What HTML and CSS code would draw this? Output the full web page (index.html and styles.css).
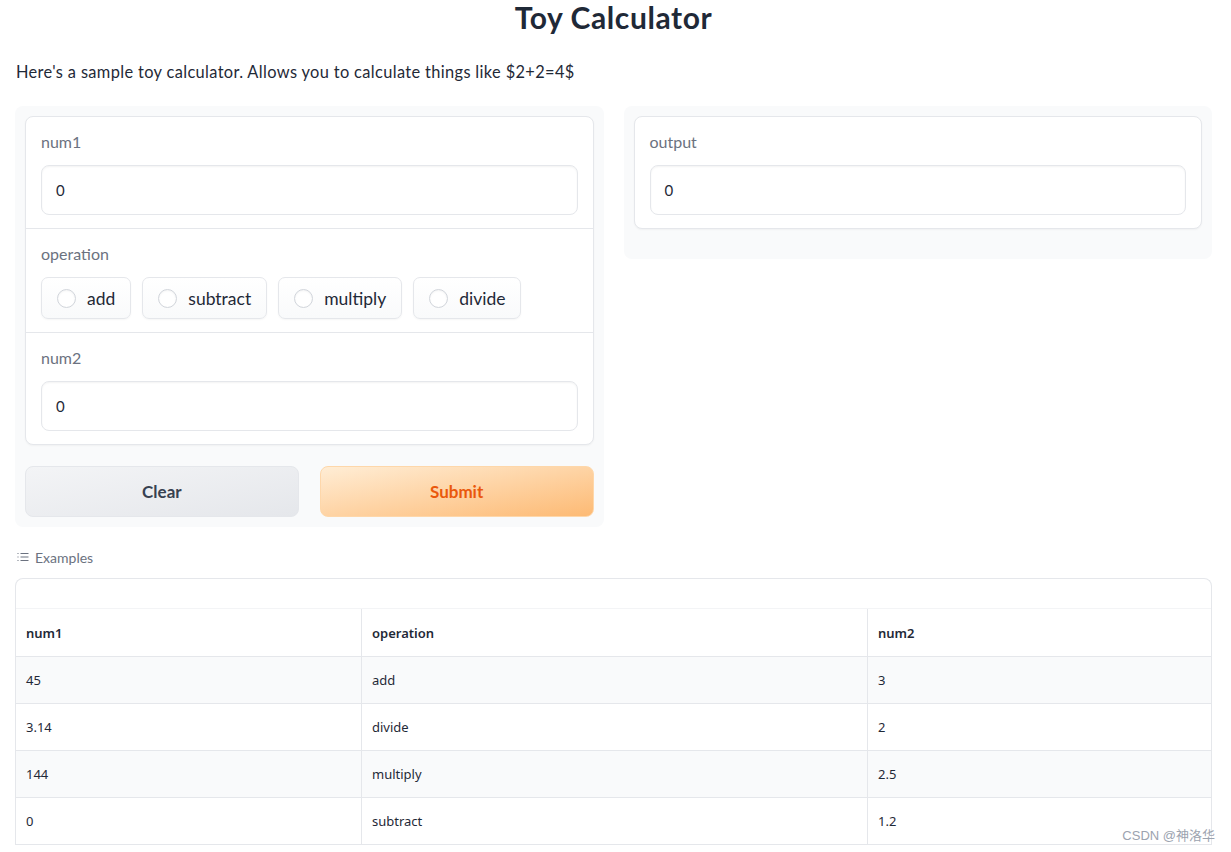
FILE: index.html
```html
<!DOCTYPE html>
<html>
<head>
<meta charset="utf-8">
<link rel="stylesheet" href="styles.css">
</head>
<body>
<div class="page">
  <h1 class="title">Toy Calculator</h1>
  <p class="desc">Here's a sample toy calculator. Allows you to calculate things like $2+2=4$</p>
  <div class="cols">
    <div class="panel">
      <div class="form">
        <div class="block">
          <div class="label">num1</div>
          <div class="input">0</div>
        </div>
        <div class="block">
          <div class="label">operation</div>
          <div class="chips">
            <div class="chip"><span class="radio"></span>add</div>
            <div class="chip"><span class="radio"></span>subtract</div>
            <div class="chip"><span class="radio"></span>multiply</div>
            <div class="chip"><span class="radio"></span>divide</div>
          </div>
        </div>
        <div class="block">
          <div class="label">num2</div>
          <div class="input">0</div>
        </div>
      </div>
      <div class="buttons">
        <div class="btn btn-clear">Clear</div>
        <div class="btn btn-submit">Submit</div>
      </div>
    </div>
    <div class="panel panel-out">
      <div class="form">
        <div class="block">
          <div class="label">output</div>
          <div class="input">0</div>
        </div>
      </div>
    </div>
  </div>
  <div class="ex-label">
    <svg class="ex-icon" width="12" height="10" viewBox="0 0 12 10" fill="none" stroke="#6b7280" stroke-width="1">
      <line x1="0.5" y1="1.5" x2="1.5" y2="1.5"/>
      <line x1="0.5" y1="5" x2="1.5" y2="5"/>
      <line x1="0.5" y1="8.5" x2="1.5" y2="8.5"/>
      <line x1="3.5" y1="1.5" x2="11.5" y2="1.5"/>
      <line x1="3.5" y1="5" x2="11.5" y2="5"/>
      <line x1="3.5" y1="8.5" x2="11.5" y2="8.5"/>
    </svg>
    <span>Examples</span>
  </div>
  <div class="table-wrap">
    <div class="table-top"></div>
    <table class="ex-table">
      <thead>
        <tr><th class="c1">num1</th><th class="c2">operation</th><th class="c3">num2</th></tr>
      </thead>
      <tbody>
        <tr class="alt"><td>45</td><td>add</td><td>3</td></tr>
        <tr><td>3.14</td><td>divide</td><td>2</td></tr>
        <tr class="alt"><td>144</td><td>multiply</td><td>2.5</td></tr>
        <tr><td>0</td><td>subtract</td><td>1.2</td></tr>
      </tbody>
    </table>
  </div>
</div>
<div class="watermark">CSDN @神洛华</div>
</body>
</html>
```

FILE: styles.css
```css
html, body {
  margin: 0;
  padding: 0;
  background: #ffffff;
}
body {
  font-family: "Lato", "Noto Sans", "Noto Sans CJK SC", sans-serif;
  color: #1f2937;
  overflow: hidden;
  height: 852px;
  position: relative;
}
.page {
  margin-left: 15px;
  width: 1197px;
  padding-top: 2px;
}
.title {
  margin: 0;
  text-align: center;
  font-size: 30px;
  line-height: 30px;
  letter-spacing: 0.6px;
  font-weight: 700;
  color: #1f2937;
}
.desc {
  margin: 30px 0 0 1px;
  font-size: 16.4px;
  line-height: 20px;
  letter-spacing: 0.35px;
  color: #1f2937;
}
.cols {
  display: flex;
  gap: 20px;
  margin-top: 24px;
  align-items: flex-start;
}
.panel {
  flex: 1;
  background: #f9fafb;
  border-radius: 8px;
  padding: 10px;
}
.panel-out {
  padding-bottom: 30px;
}
.form {
  background: #ffffff;
  border: 1px solid #e5e7eb;
  border-radius: 8px;
  box-shadow: 0 1px 2px rgba(0,0,0,0.04);
}
.block {
  padding: 15px 15px 13px;
  border-top: 1px solid #e5e7eb;
}
.block:first-child {
  border-top: none;
}
.label {
  font-size: 16px;
  line-height: 20px;
  color: #6b7280;
  margin-bottom: 13px;
}
.input {
  height: 48px;
  border: 1px solid #e5e7eb;
  border-radius: 8px;
  box-shadow: inset 0 1px 2px rgba(0,0,0,0.05);
  padding: 0 14px;
  display: flex;
  align-items: center;
  font-size: 15px;
  color: #1f2937;
}
.chips {
  display: flex;
  gap: 11px;
}
.chip {
  height: 40px;
  border: 1px solid #e5e7eb;
  border-radius: 7px;
  background: linear-gradient(to bottom, #ffffff, #f9fafb);
  box-shadow: 0 1px 2px rgba(0,0,0,0.04);
  display: flex;
  align-items: center;
  padding: 0 15px 0 15px;
  font-size: 17.5px;
  color: #1f2937;
}
.radio {
  width: 19px;
  height: 19px;
  border: 1px solid #d1d5db;
  border-radius: 50%;
  box-sizing: border-box;
  background: #ffffff;
  margin-right: 11px;
  box-shadow: inset 0 1px 2px rgba(0,0,0,0.05);
}
.buttons {
  display: flex;
  gap: 21px;
  margin-top: 21px;
}
.btn {
  flex: 1;
  height: 49px;
  border-radius: 8px;
  display: flex;
  align-items: center;
  justify-content: center;
  font-size: 17px;
  font-weight: 700;
}
.btn-clear {
  background: linear-gradient(to bottom right, #f3f4f6, #e5e7eb);
  border: 1px solid #e5e7eb;
  color: #374151;
}
.btn-submit {
  background: linear-gradient(to bottom right, #ffedd5, #fdba74);
  border: 1px solid #fed7aa;
  color: #ea580c;
}
.ex-label {
  display: flex;
  align-items: center;
  margin-top: 22px;
  height: 16px;
  font-size: 14px;
  color: #6b7280;
  padding-left: 2px;
}
.ex-icon {
  margin-right: 6px;
}
.table-wrap {
  margin-top: 13px;
  border: 1px solid #e5e7eb;
  border-bottom: none;
  border-radius: 8px 8px 0 0;
  overflow: hidden;
}
.table-top {
  height: 29px;
  border-bottom: 1px solid #f3f4f6;
}
.ex-table {
  width: 100%;
  border-collapse: collapse;
  table-layout: fixed;
  font-family: "Noto Sans", "DejaVu Sans", sans-serif;
  font-size: 13px;
  color: #1f2937;
}
.ex-table th.c1 { width: 325px; }
.ex-table th.c2 { width: 485px; }
.ex-table th {
  text-align: left;
  font-weight: 600;
  height: 47px;
  padding: 0 10px;
  border-bottom: 1px solid #e5e7eb;
  border-left: 1px solid #e5e7eb;
}
.ex-table td {
  height: 46px;
  padding: 0 10px;
  border-bottom: 1px solid #e5e7eb;
  border-left: 1px solid #e5e7eb;
}
.ex-table th:first-child, .ex-table td:first-child {
  border-left: none;
}
.ex-table tr.alt td {
  background: #f9fafb;
}
.watermark {
  position: absolute;
  right: 16px;
  bottom: 8px;
  font-family: "Liberation Sans", "Noto Sans CJK SC", sans-serif;
  font-size: 13px;
  color: #9ca3af;
}
```
